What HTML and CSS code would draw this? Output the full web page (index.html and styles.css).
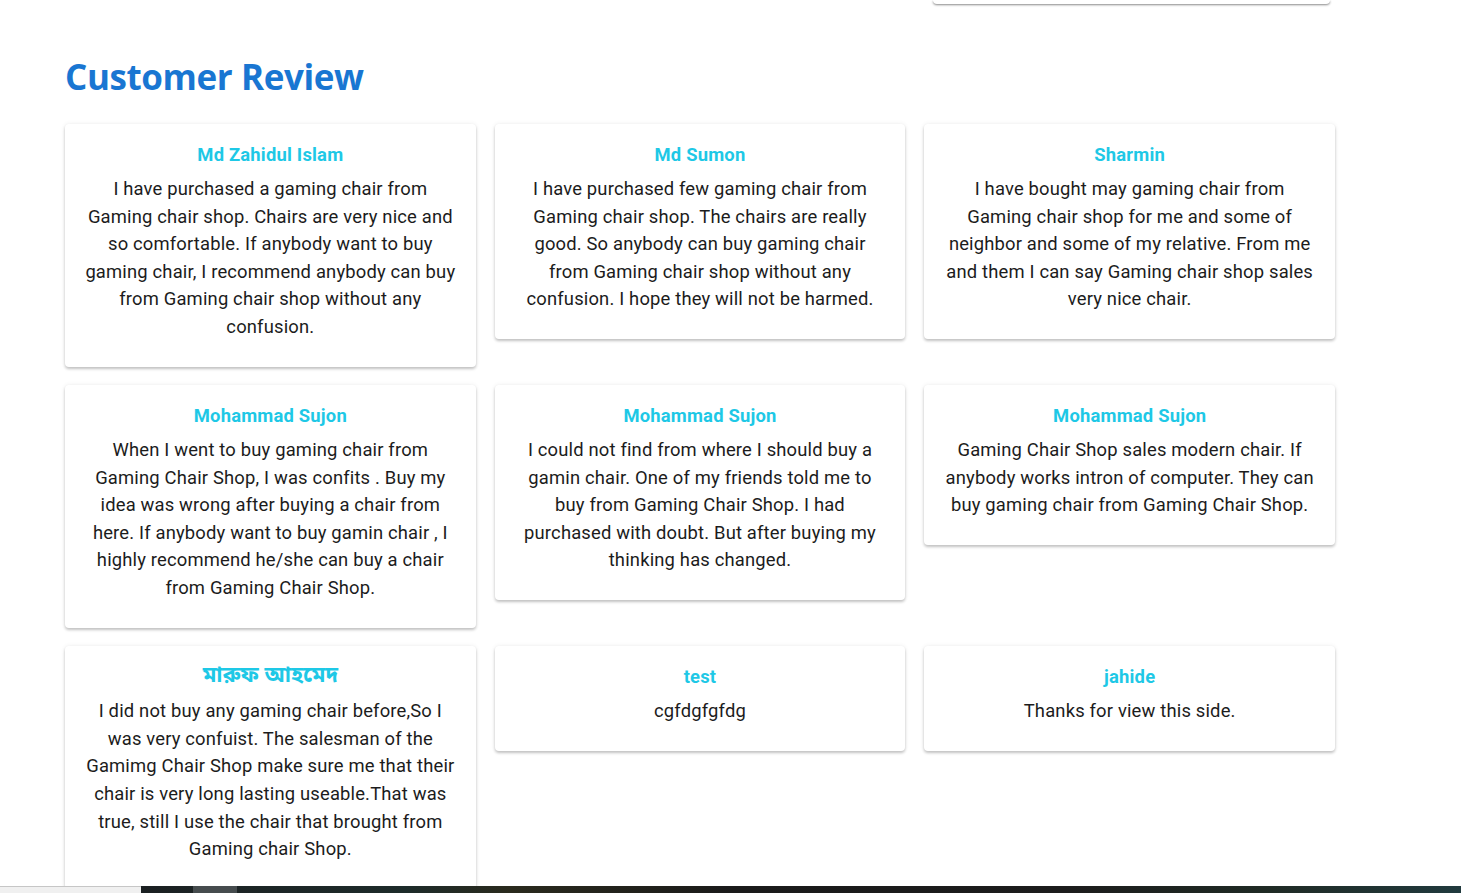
FILE: index.html
```html
<!DOCTYPE html>
<html lang="en">
<head>
<meta charset="utf-8">
<title>Customer Review</title>
<link rel="stylesheet" href="styles.css">
</head>
<body>
<div class="prev-strip"><div class="prev-card"></div></div>
<section class="reviews">
  <h2 class="reviews-title">Customer Review</h2>
  <div class="review-grid">
    <div class="review-card">
      <h5 class="review-name">Md Zahidul Islam</h5>
      <p class="review-text">I have purchased a gaming chair from Gaming chair shop. Chairs are very nice and so comfortable. If anybody want to buy gaming chair, I recommend anybody can buy from Gaming chair shop without any confusion.</p>
    </div>
    <div class="review-card">
      <h5 class="review-name">Md Sumon</h5>
      <p class="review-text">I have purchased few gaming chair from Gaming chair shop. The chairs are really good. So anybody can buy gaming chair from Gaming chair shop without any confusion. I hope they will not be harmed.</p>
    </div>
    <div class="review-card">
      <h5 class="review-name">Sharmin</h5>
      <p class="review-text">I have bought may gaming chair from Gaming chair shop for me and some of neighbor and some of my relative. From me and them I can say Gaming chair shop sales very nice chair.</p>
    </div>
    <div class="review-card">
      <h5 class="review-name">Mohammad Sujon</h5>
      <p class="review-text">When I went to buy gaming chair from Gaming Chair Shop, I was confits . Buy my idea was wrong after buying a chair from here. If anybody want to buy gamin chair , I highly recommend he/she can buy a chair from Gaming Chair Shop.</p>
    </div>
    <div class="review-card">
      <h5 class="review-name">Mohammad Sujon</h5>
      <p class="review-text">I could not find from where I should buy a gamin chair. One of my friends told me to buy from Gaming Chair Shop. I had purchased with doubt. But after buying my thinking has changed.</p>
    </div>
    <div class="review-card">
      <h5 class="review-name">Mohammad Sujon</h5>
      <p class="review-text">Gaming Chair Shop sales modern chair. If anybody works intron of computer. They can buy gaming chair from Gaming Chair Shop.</p>
    </div>
    <div class="review-card">
      <h5 class="review-name review-name-bn">মারুফ আহমেদ</h5>
      <p class="review-text">I did not buy any gaming chair before,So I was very confuist. The salesman of the Gamimg Chair Shop make sure me that their chair is very long lasting useable.That was true, still I use the chair that brought from Gaming chair Shop.</p>
    </div>
    <div class="review-card">
      <h5 class="review-name">test</h5>
      <p class="review-text">cgfdgfgfdg</p>
    </div>
    <div class="review-card">
      <h5 class="review-name">jahide</h5>
      <p class="review-text">Thanks for view this side.</p>
    </div>
  </div>
</section>
<div class="taskbar"><div class="taskbar-left"></div><div class="taskbar-right"><div class="taskbar-item"></div></div></div>
</body>
</html>
```

FILE: styles.css
```css
html, body {
  margin: 0;
  padding: 0;
  background: #ffffff;
}
body {
  font-family: Roboto, "Liberation Sans", sans-serif;
  color: #1c1c1c;
  overflow: hidden;
  height: 893px;
}
.prev-strip {
  height: 5px;
  padding-left: 933px;
}
.prev-card {
  width: 397px;
  height: 4px;
  background: #fff;
  border-radius: 0 0 5px 5px;
  box-shadow: 0 1px 2px rgba(0,0,0,0.35), 0 1px 3px rgba(0,0,0,0.15);
}
.reviews {
  padding: 0 0 0 65px;
}
.reviews-title {
  margin: 50px 0 25px 0;
  font-family: "Open Sans", "Noto Sans", sans-serif;
  font-weight: 700;
  font-size: 35px;
  line-height: 44px;
  color: #1976d2;
  letter-spacing: -0.4px;
}
.review-grid {
  width: 1270px;
  display: grid;
  grid-template-columns: repeat(3, 1fr);
  column-gap: 19px;
  row-gap: 18.5px;
  align-items: start;
}
.review-card {
  background: #fff;
  border-radius: 4px;
  padding: 17px 20px 26px;
  text-align: center;
  box-shadow: 0 2px 3px rgba(0,0,0,0.22), 0 0 5px rgba(0,0,0,0.07);
}
.review-name {
  margin: 0 0 6px;
  font-size: 18.4px;
  line-height: 28px;
  font-weight: 700;
  letter-spacing: 0.2px;
  color: #1ec8e6;
}
.review-name-bn {
  font-family: "Noto Sans Bengali", "Noto Serif Bengali", "Lohit Bengali", Roboto, sans-serif;
  font-size: 22px;
  letter-spacing: 0;
}
.review-text {
  margin: 0;
  font-size: 18.4px;
  line-height: 27.6px;
  letter-spacing: 0.17px;
}
.taskbar {
  position: fixed;
  left: 0;
  right: 0;
  bottom: 0;
  height: 7px;
  display: flex;
}
.taskbar-left {
  width: 141px;
  background: #f0f0f0;
  border-top: 1px solid #c6c6c6;
  box-sizing: border-box;
}
.taskbar-right {
  flex: 1;
  padding-left: 52px;
  background: linear-gradient(90deg, #1b2022 0%, #1d2b2a 20%, #2a2a1d 28%, #1a1a1a 45%, #1c1c1c 70%, #1f2a24 85%, #213a3e 100%);
}
.taskbar-item {
  width: 44px;
  height: 100%;
  background: #464c4e;
}
```
